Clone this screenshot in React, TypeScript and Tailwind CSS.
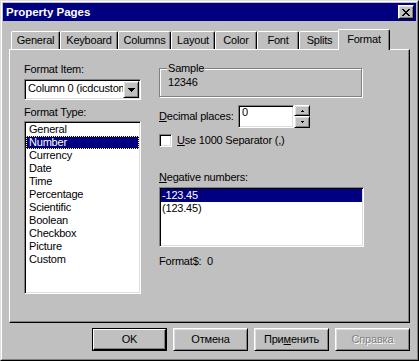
import React from "react";

const sunken =
  "border border-t-[#808080] border-l-[#808080] border-r-white border-b-white shadow-[inset_1px_1px_0_#000,inset_-1px_-1px_0_#dfdfdf]";
const raised =
  "border border-t-white border-l-white border-r-black border-b-black shadow-[inset_1px_1px_0_#dfdfdf,inset_-1px_-1px_0_#808080]";

const tabs = [
  { label: "General", cls: "w-[49px]" },
  { label: "Keyboard", cls: "w-[58px]" },
  { label: "Columns", cls: "w-[53px]" },
  { label: "Layout", cls: "w-[44px]" },
  { label: "Color", cls: "w-[42px]" },
  { label: "Font", cls: "w-[42px]" },
  { label: "Splits", cls: "w-[41px]" },
];

const types = [
  "General",
  "Number",
  "Currency",
  "Date",
  "Time",
  "Percentage",
  "Scientific",
  "Boolean",
  "Checkbox",
  "Picture",
  "Custom",
];

function CloseIcon() {
  const px: [number, number][] = [
    [0, 0], [1, 0], [6, 0], [7, 0],
    [1, 1], [2, 1], [5, 1], [6, 1],
    [2, 2], [3, 2], [4, 2], [5, 2],
    [3, 3], [4, 3],
    [2, 4], [3, 4], [4, 4], [5, 4],
    [1, 5], [2, 5], [5, 5], [6, 5],
    [0, 6], [1, 6], [6, 6], [7, 6],
  ];
  return (
    <svg width="8" height="7" viewBox="0 0 8 7" shapeRendering="crispEdges">
      {px.map(([x, y], i) => (
        <rect key={i} x={x} y={y} width="1" height="1" fill="#000" />
      ))}
    </svg>
  );
}

function DownArrow() {
  return (
    <svg width="7" height="4" viewBox="0 0 7 4" shapeRendering="crispEdges">
      <rect x="0" y="0" width="7" height="1" fill="#000" />
      <rect x="1" y="1" width="5" height="1" fill="#000" />
      <rect x="2" y="2" width="3" height="1" fill="#000" />
      <rect x="3" y="3" width="1" height="1" fill="#000" />
    </svg>
  );
}

function SmallArrow({ up }: { up?: boolean }) {
  return (
    <svg width="3" height="2" viewBox="0 0 3 2" shapeRendering="crispEdges">
      {up ? (
        <>
          <rect x="1" y="0" width="1" height="1" fill="#000" />
          <rect x="0" y="1" width="3" height="1" fill="#000" />
        </>
      ) : (
        <>
          <rect x="0" y="0" width="3" height="1" fill="#000" />
          <rect x="1" y="1" width="1" height="1" fill="#000" />
        </>
      )}
    </svg>
  );
}

export default function App() {
  return (
    <div className="w-[419px] h-[361px] bg-[#c0c0c0] border border-t-[#dfdfdf] border-l-[#dfdfdf] border-r-black border-b-black font-['Liberation_Sans',Arial,sans-serif] text-[11px] leading-[13px] tracking-[-0.2px] text-black select-none">
      <div className="h-full border border-t-white border-l-white border-r-[#808080] border-b-[#808080] p-px flex flex-col">
        {/* Title bar */}
        <div className="h-[18px] bg-[#000080] flex items-center justify-between pl-[3px] pr-[2px]">
          <span className="text-white font-bold text-[11.5px] tracking-[0px]">Property Pages</span>
          <div className={`w-[16px] h-[14px] bg-[#c0c0c0] flex items-center justify-center ${raised}`}>
            <CloseIcon />
          </div>
        </div>

        {/* Tab strip */}
        <div className="h-[28px] flex items-end pl-[8px]">
          {tabs.map((t) => (
            <div
              key={t.label}
              className={`${t.cls} h-[18px] border-l border-t border-r border-l-white border-t-white border-r-black rounded-tl-[2px] rounded-tr-[2px] shadow-[inset_-1px_0_0_#808080] flex justify-center pt-[2px] whitespace-nowrap`}
            >
              {t.label}
            </div>
          ))}
          <div className="relative z-10 w-[52px] -mx-[2px] -mb-px h-[21px] bg-[#c0c0c0] border-l border-t border-r border-l-white border-t-white border-r-black rounded-tl-[2px] rounded-tr-[2px] shadow-[inset_-1px_0_0_#808080] flex justify-center pt-[3px] whitespace-nowrap">
            Format
          </div>
        </div>

        {/* Panel */}
        <div className="mx-[6px] h-[274px] border border-t-white border-l-white border-r-black border-b-black shadow-[inset_-1px_-1px_0_#808080] flex pl-[14px] gap-[18px]">
          {/* Left column */}
          <div className="w-[117px] flex flex-col pt-[13px]">
            <div>Format Item:</div>
            <div className={`mt-[3px] h-[21px] bg-white flex ${sunken} p-[1px]`}>
              <div className="flex-1 overflow-hidden whitespace-nowrap pl-[2px] pt-[1px]">Column 0 (icdcustomer)</div>
              <div className={`w-[16px] h-full bg-[#c0c0c0] flex items-center justify-center ${raised}`}>
                <DownArrow />
              </div>
            </div>
            <div className="mt-[6px]">Format Type:</div>
            <div className={`mt-[2px] h-[173px] bg-white ${sunken} p-[1px]`}>
              {types.map((t) => (
                <div
                  key={t}
                  className={
                    t === "Number"
                      ? "h-[13px] bg-[#000080] text-white pl-[2px] border border-dotted border-[#ffff80] leading-[11px]"
                      : "h-[13px] pl-[3px]"
                  }
                >
                  {t}
                </div>
              ))}
            </div>
          </div>

          {/* Right column */}
          <div className="flex flex-col pt-[18px]">
            <div className="relative w-[203px] h-[29px] border border-[#808080] shadow-[inset_1px_1px_0_#fff,1px_1px_0_#fff] pl-[8px] pt-[7px]">
              <span className="absolute -top-[7px] left-[7px] bg-[#c0c0c0] px-px">Sample</span>
              12346
            </div>

            <div className="mt-[8px] h-[23px] flex items-center">
              <div className="w-[79px]">
                <span className="underline underline-offset-[1px]">D</span>ecimal places:
              </div>
              <div className={`w-[56px] h-[23px] bg-white ${sunken} pl-[3px] pt-[2px] leading-[9px]`}>0</div>
              <div className="w-[16px] h-[23px] flex flex-col">
                <div className={`h-[11px] bg-[#c0c0c0] flex items-center justify-center ${raised}`}>
                  <SmallArrow up />
                </div>
                <div className={`h-[12px] bg-[#c0c0c0] flex items-center justify-center ${raised}`}>
                  <SmallArrow />
                </div>
              </div>
            </div>

            <div className="mt-[6px] h-[13px] flex items-center gap-[5px]">
              <div className={`w-[13px] h-[13px] bg-white ${sunken}`} />
              <div>
                <span className="underline underline-offset-[1px]">U</span>se 1000 Separator (,)
              </div>
            </div>

            <div className="mt-[24px]">
              <span className="underline underline-offset-[1px]">N</span>egative numbers:
            </div>
            <div className={`mt-[3px] w-[205px] h-[60px] bg-white ${sunken} p-[1px]`}>
              <div className="h-[13px] bg-[#000080] text-white pl-[1px]">-123.45</div>
              <div className="h-[13px] pl-[1px]">(123.45)</div>
            </div>

            <div className="mt-[8px]">Format$:&nbsp; 0</div>
          </div>
        </div>

        {/* Buttons */}
        <div className="mt-[5px] flex justify-end gap-[6px] pr-[6px]">
          <div className="w-[75px] h-[23px] border border-black">
            <div className="h-full border border-t-white border-l-white border-r-black border-b-black shadow-[inset_-1px_-1px_0_#808080] flex items-center justify-center">
              OK
            </div>
          </div>
          <div className={`w-[75px] h-[23px] ${raised} flex items-center justify-center`}>Отмена</div>
          <div className={`w-[75px] h-[23px] ${raised} flex items-center justify-center`}>
            При<span className="underline underline-offset-[1px]">м</span>енить
          </div>
          <div className={`w-[75px] h-[23px] ${raised} flex items-center justify-center text-[#808080] [text-shadow:1px_1px_0_#fff]`}>
            Справка
          </div>
        </div>
      </div>
    </div>
  );
}
